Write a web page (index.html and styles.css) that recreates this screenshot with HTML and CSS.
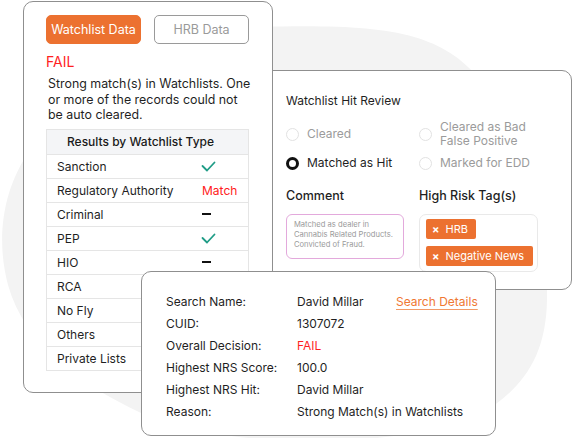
FILE: index.html
```html
<!DOCTYPE html>
<html lang="en">
<head>
<meta charset="utf-8">
<title>Watchlist Review</title>
<link rel="stylesheet" href="styles.css">
</head>
<body>
<div class="canvas">
  <svg class="blob" width="573" height="438" viewBox="0 0 573 438" aria-hidden="true">
    <path d="M260 27 C380 24 440 30 480 80 C520 130 548 210 547 300 C546 360 520 390 480 415 C400 450 220 450 141 413 C78 383 25 345 8 285 C-4 240 2 190 30 150 C60 105 150 30 260 27 Z" fill="#f3f3f3"/>
  </svg>

  <section class="card card-review">
    <h2 class="review-title">Watchlist Hit Review</h2>
    <div class="radios">
      <div class="radio"><span class="dot"></span><span class="radio-label muted">Cleared</span></div>
      <div class="radio"><span class="dot"></span><span class="radio-label muted">Cleared as Bad<br>False Positive</span></div>
      <div class="radio"><span class="dot dot-on"></span><span class="radio-label">Matched as Hit</span></div>
      <div class="radio"><span class="dot"></span><span class="radio-label muted">Marked for EDD</span></div>
    </div>
    <div class="review-fields">
      <div class="field">
        <h3 class="field-title">Comment</h3>
        <div class="comment-box">Matched as dealer in<br>Cannabis Related Products.<br>Convicted of Fraud.</div>
      </div>
      <div class="field">
        <h3 class="field-title">High Risk Tag(s)</h3>
        <div class="tag-box">
          <span class="tag"><span class="tag-x">×</span>HRB</span>
          <span class="tag tag-wide"><span class="tag-x">×</span>Negative News</span>
        </div>
      </div>
    </div>
  </section>

  <section class="card card-data">
    <div class="tabs">
      <button class="tab tab-active">Watchlist Data</button>
      <button class="tab">HRB Data</button>
    </div>
    <div class="fail">FAIL</div>
    <p class="summary">Strong match(s) in Watchlists. One<br>or more of the records could not<br>be auto cleared.</p>
    <div class="wl-table">
      <div class="wl-head">Results by Watchlist Type</div>
      <div class="wl-row"><span class="wl-name">Sanction</span><span class="wl-status"><svg class="check" width="15" height="11" viewBox="0 0 15 11"><polyline points="1.5,5 6,9.5 13.5,1.5" fill="none" stroke="#1f9c86" stroke-width="1.8" stroke-linecap="round" stroke-linejoin="round"/></svg></span></div>
      <div class="wl-row"><span class="wl-name">Regulatory Authority</span><span class="wl-status match">Match</span></div>
      <div class="wl-row"><span class="wl-name">Criminal</span><span class="wl-status"><span class="dash"></span></span></div>
      <div class="wl-row"><span class="wl-name">PEP</span><span class="wl-status"><svg class="check" width="15" height="11" viewBox="0 0 15 11"><polyline points="1.5,5 6,9.5 13.5,1.5" fill="none" stroke="#1f9c86" stroke-width="1.8" stroke-linecap="round" stroke-linejoin="round"/></svg></span></div>
      <div class="wl-row"><span class="wl-name">HIO</span><span class="wl-status"><span class="dash"></span></span></div>
      <div class="wl-row"><span class="wl-name">RCA</span><span class="wl-status"></span></div>
      <div class="wl-row"><span class="wl-name">No Fly</span><span class="wl-status"></span></div>
      <div class="wl-row"><span class="wl-name">Others</span><span class="wl-status"></span></div>
      <div class="wl-row"><span class="wl-name">Private Lists</span><span class="wl-status"></span></div>
    </div>
  </section>

  <section class="card card-summary">
    <div class="sum-grid">
      <span class="sum-label">Search Name:</span><span class="sum-value">David Millar</span><a class="sum-link" href="#">Search Details</a>
      <span class="sum-label">CUID:</span><span class="sum-value span2">1307072</span>
      <span class="sum-label">Overall Decision:</span><span class="sum-value span2 red">FAIL</span>
      <span class="sum-label">Highest NRS Score:</span><span class="sum-value span2">100.0</span>
      <span class="sum-label">Highest NRS Hit:</span><span class="sum-value span2">David Millar</span>
      <span class="sum-label">Reason:</span><span class="sum-value span2">Strong Match(s) in Watchlists</span>
    </div>
  </section>
</div>
</body>
</html>
```

FILE: styles.css
```css
* { box-sizing: border-box; }
html, body { margin: 0; padding: 0; background: #fff; }
body {
  font-family: Inter, "Noto Sans", "Liberation Sans", sans-serif;
  color: #1f1f1f;
  width: 573px;
  height: 438px;
  overflow: hidden;
}
.canvas {
  position: relative;
  width: 573px;
  height: 438px;
}
.blob { position: absolute; left: 0; top: 0; }

.card {
  position: absolute;
  background: #fff;
  border: 1px solid #8f8f8f;
  border-radius: 10px;
}

/* ---------- Left card ---------- */
.card-data {
  left: 23px;
  top: 1px;
  width: 250px;
  height: 392px;
  padding: 13px 22px 0 22px;
}
.tabs { display: flex; gap: 13px; }
.tab {
  width: 95px;
  height: 29px;
  border-radius: 5px;
  border: 1px solid #9a9a9a;
  background: #fff;
  color: #9a9a9a;
  font-family: inherit;
  font-size: 12.5px;
  padding: 0;
}
.tab-active {
  background: #ec7130;
  border-color: #ec7130;
  color: #fff;
}
.fail {
  margin-top: 9px;
  color: #ff1f1f;
  font-size: 14px;
  line-height: 17px;
}
.summary {
  margin: 6px 0 0 2px;
  font-size: 12.4px;
  line-height: 15.5px;
  color: #1f1f1f;
  white-space: nowrap;
}
.wl-table {
  margin-top: 6px;
  width: 203px;
  border: 1px solid #e5e5e5;
  border-bottom: 0;
}
.wl-head {
  height: 24px;
  background: #f4f5f7;
  font-size: 12px;
  font-weight: 500;
  line-height: 23px;
  padding-left: 20px;
  color: #1a1a1a;
}
.wl-row {
  display: grid;
  grid-template-columns: 155px 1fr;
  height: 24px;
  border-top: 1px solid #e5e5e5;
  align-items: center;
  font-size: 12px;
}
.wl-row:last-child { border-bottom: 1px solid #e5e5e5; height: 25px; }
.wl-name { padding-left: 10px; }
.wl-status { display: flex; align-items: center; }
.match { color: #ff2020; }
.check { display: block; margin-left: -1px; }
.dash { display: block; width: 9px; height: 2.5px; background: #111; }

/* ---------- Review card ---------- */
.card-review {
  left: 240px;
  top: 70px;
  width: 332px;
  height: 220px;
  padding: 22px 0 0 45px;
}
.review-title {
  margin: 0;
  font-size: 12px;
  font-weight: 400;
  line-height: 16px;
}
.radios {
  margin-top: 11px;
  display: grid;
  grid-template-columns: 133px 130px;
  row-gap: 8px;
}
.radio { display: flex; align-items: center; gap: 8px; }
.radio:nth-child(1), .radio:nth-child(2) { height: 28px; }
.dot {
  flex: none;
  width: 13px;
  height: 13px;
  border-radius: 50%;
  border: 1px solid #e2e2e2;
  background: #fff;
}
.dot-on { border: 3.5px solid #111; }
.radio-label {
  font-size: 12px;
  line-height: 14px;
  color: #1f1f1f;
}
.muted { color: #9b9b9b; }
.review-fields {
  margin-top: 18px;
  display: grid;
  grid-template-columns: 133px 119px;
}
.field-title {
  margin: 0 0 10px;
  font-size: 12.5px;
  font-weight: 500;
  line-height: 16px;
}
.comment-box {
  width: 118px;
  height: 45px;
  border: 1px solid #e3a9dc;
  border-radius: 6px;
  padding: 5px 0 0 7px;
  font-size: 7.6px;
  line-height: 10px;
  color: #9a9a9a;
  white-space: nowrap;
}
.tag-box {
  width: 119px;
  height: 58px;
  border: 1px solid #e9e9e9;
  border-radius: 7px;
  padding: 4px 6px;
  display: flex;
  flex-direction: column;
  align-items: flex-start;
  gap: 7px;
}
.tag {
  height: 20px;
  width: 50px;
  background: #ec7130;
  color: #fff;
  border-radius: 2px;
  font-size: 11px;
  display: flex;
  align-items: center;
  padding-left: 6px;
}
.tag-wide { width: 107px; }
.tag-x { font-size: 11px; font-weight: 700; margin-right: 6px; }

/* ---------- Summary card ---------- */
.card-summary {
  left: 141px;
  top: 271px;
  width: 355px;
  height: 165px;
  padding: 18px 0 0 24px;
}
.sum-grid {
  display: grid;
  grid-template-columns: 131px 99px auto;
  grid-auto-rows: 22px;
  align-items: center;
  font-size: 12px;
  color: #1f1f1f;
}
.span2 { grid-column: 2 / span 2; }
.red { color: #ff1f1f; }
.sum-link {
  color: #f07833;
  text-decoration: underline;
  text-underline-offset: 3px;
  text-decoration-thickness: 1px;
  text-decoration-color: #f29a66;
}
```
